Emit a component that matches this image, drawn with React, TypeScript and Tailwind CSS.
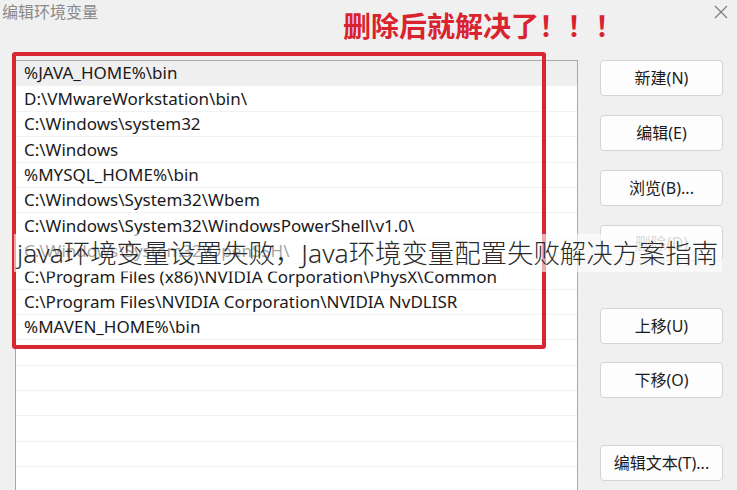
import React from "react";

const rows = [
  "%JAVA_HOME%\\bin",
  "D:\\VMwareWorkstation\\bin\\",
  "C:\\Windows\\system32",
  "C:\\Windows",
  "%MYSQL_HOME%\\bin",
  "C:\\Windows\\System32\\Wbem",
  "C:\\Windows\\System32\\WindowsPowerShell\\v1.0\\",
  "C:\\Windows\\System32\\OpenSSH\\",
  "C:\\Program Files (x86)\\NVIDIA Corporation\\PhysX\\Common",
  "C:\\Program Files\\NVIDIA Corporation\\NVIDIA NvDLISR",
  "%MAVEN_HOME%\\bin",
  "",
  "",
  "",
  "",
  "",
  "",
];

function Btn({ label, disabled, className = "" }: { label: string; disabled?: boolean; className?: string }) {
  return (
    <div
      className={
        "h-[36px] w-[123px] rounded-[4px] border border-[#d4d4d4] bg-[#fdfdfd] flex items-center justify-center text-[16px] " +
        (disabled ? "text-[#a0a0a0] " : "text-[#1b1b1b] ") +
        className
      }
    >
      {label}
    </div>
  );
}

export default function App() {
  return (
    <div
      className="relative w-[737px] h-[490px] overflow-hidden bg-[#f0f0f0]"
      style={{ fontFamily: '"Noto Sans", "Noto Sans CJK SC", sans-serif' }}
    >
      {/* header */}
      <div className="flex h-[60px] items-start">
        <div className="w-[343px] pl-[2px] pt-[1px] text-[16px] text-[#8a8a8a] leading-[22px]">编辑环境变量</div>
        <div className="pt-[10px] text-[28px] font-bold text-[#d9232e] leading-[33px]">删除后就解决了！！！</div>
        <div className="ml-auto mr-[9px] mt-[5px] w-[14px] h-[14px]">
          <svg width="14" height="14" viewBox="0 0 14 14">
            <path d="M1 1 L13 13 M13 1 L1 13" stroke="#7a7a7a" strokeWidth="1.1" fill="none" />
          </svg>
        </div>
      </div>

      {/* body */}
      <div className="flex">
        <div className="ml-[15px] w-[563px] h-[440px] border-l border-t border-r border-[#a8a8a8] bg-white">
          {rows.map((r, i) => (
            <div
              key={i}
              className={
                "h-[25.4px] pl-[8px] flex items-center text-[17px] text-[#1a1a1a] whitespace-nowrap border-b border-[#f2f2f2] " +
                (i === 0 ? "bg-[#efefef]" : "")
              }
            >
              {r}
            </div>
          ))}
        </div>
        <div className="ml-[22px] flex flex-col">
          <Btn label="新建(N)" />
          <Btn label="编辑(E)" className="mt-[19px]" />
          <Btn label="浏览(B)..." className="mt-[19px]" />
          <Btn label="删除(D)" disabled className="mt-[19px]" />
          <Btn label="上移(U)" className="mt-[47px]" />
          <Btn label="下移(O)" className="mt-[18px]" />
          <Btn label="编辑文本(T)..." className="mt-[47px]" />
        </div>
      </div>

      {/* red annotation box */}
      <div className="absolute left-[12px] top-[52px] w-[534px] h-[297px] border-[4px] border-[#d72731] rounded-[3px]" />

      {/* watermark */}
      <div className="absolute left-[14px] top-[234px] w-[708px] h-[38px] bg-white/60 flex items-center">
        <span className="pl-[3px] text-[26.4px] font-light text-[#2a2a2a] whitespace-nowrap leading-[30px]">
          java环境变量设置失败，Java环境变量配置失败解决方案指南
        </span>
      </div>
    </div>
  );
}
